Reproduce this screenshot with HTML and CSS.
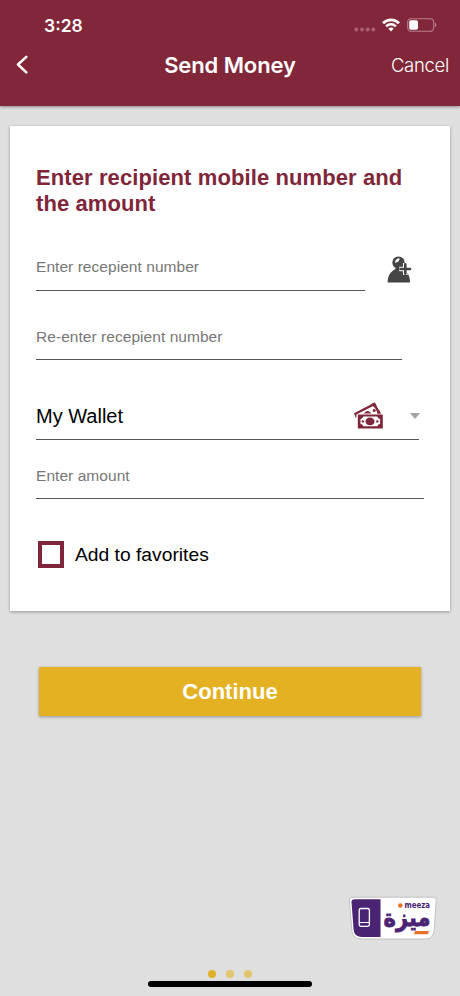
FILE: index.html
```html
<!DOCTYPE html>
<html lang="en">
  <head>
    <meta charset="UTF-8" />
    <meta name="viewport" content="width=device-width, initial-scale=1.0" />
    <title>Send Money</title>
    <link rel="stylesheet" href="styles.css">
  </head>
  <body>
    <header>
      <div class="status-bar">
        <span class="time">3:28</span>
        <div class="status-icons">
          <svg width="22" height="5" viewBox="0 0 22 5" fill="#a9606e">
            <circle cx="2.3" cy="2.5" r="2" />
            <circle cx="8" cy="2.5" r="2" />
            <circle cx="13.6" cy="2.5" r="2" />
            <circle cx="19.3" cy="2.5" r="2" />
          </svg>
          <svg class="wifi" width="18" height="14" viewBox="0 0 18 14" fill="none" stroke="#fff">
            <path d="M1 5.2C5.4.7 12.6.7 17 5.2" stroke-width="2.7" />
            <path d="M4.1 8.3c2.7-2.7 7.1-2.7 9.8 0" stroke-width="2.4" />
            <path d="M6.2 10.6c1.6-1.5 4-1.5 5.6 0L9 13.5z" fill="#fff" stroke="none" />
          </svg>
          <svg width="30" height="14" viewBox="0 0 30 14">
            <rect x="0.7" y="0.7" width="26" height="12.6" rx="3.6" fill="none" stroke="#b8808c" stroke-width="1.1" />
            <rect x="2.2" y="2.3" width="8.8" height="9.4" rx="1.8" fill="#fff" />
            <path d="M28 4.8c1.7.5 1.7 3.9 0 4.4z" fill="#b8808c" />
          </svg>
        </div>
      </div>
      <nav>
        <a href="#" class="back" aria-label="Back">
          <svg width="12" height="20" viewBox="0 0 12 20" fill="none" stroke="#fff" stroke-width="2.5">
            <path d="M10.3 1.8 2 9.5l8.3 7.9" stroke-linecap="round" stroke-linejoin="round" />
          </svg>
        </a>
        <h1>Send Money</h1>
        <a href="#" class="cancel">Cancel</a>
      </nav>
    </header>

    <main>
      <form action="">
        <h2>Enter recipient mobile number and the amount</h2>
        <div class="row">
          <input type="text" class="field recipient" placeholder="Enter recepient number" />
          <svg class="contact" width="26" height="28" viewBox="0 0 26 28">
            <circle cx="11.5" cy="6.7" r="6.2" fill="#454545" />
            <path d="M8.8 10h5.8l.5 3.3c4.8 1.3 8 6.5 8 13.2H.6c0-6.7 3.2-11.4 7.7-13.2z" fill="#454545" />
            <path d="M8 6.8C8 3.8 10 2.3 12.6 2.3c.2 2.3-1.6 4.1-4.6 4.5z" fill="#fff" />
            <path d="M18.3 7v12M12.3 13h12" stroke="#fff" stroke-width="4.6" />
            <path d="M18.3 8.3v9.4M13.6 13H23" stroke="#454545" stroke-width="2.6" stroke-linecap="round" />
          </svg>
        </div>
        <input type="text" class="field confirm" placeholder="Re-enter recepient number" />
        <div class="wallet">
          <span>My Wallet</span>
          <svg class="cash" width="30" height="28" viewBox="0 0 30 28">
            <path d="M0 11.2 20.7.4l6 11H24l-4.3-7.7L2.4 12.5v3H1.6z" fill="#80263a" />
            <path d="m17.5 1.7 3.2-1.3 2 3.6-2.5 1.4zM23.3 9.2l2.2-.7 1.4 3.1h-4z" fill="#80263a" />
            <path d="M10 11.5c1.8-3.1 5-3.4 7.1 0z" fill="#80263a" />
            <circle cx="20.2" cy="8.5" r="1.5" fill="#80263a" />
            <path d="M3.8 12.5h25v14h-25z" fill="#80263a" />
            <path d="M9.2 14.6h14.2c.2 1.3 1 2 2.7 2.3v5c-1.7.3-2.5 1-2.7 2.3H9.2c-.2-1.3-1-2-2.7-2.3v-5c1.7-.3 2.5-1 2.7-2.3z" fill="#fff" />
            <ellipse cx="16" cy="19.4" rx="4.5" ry="3.9" fill="#80263a" />
            <circle cx="8.9" cy="19.4" r="1.2" fill="#80263a" />
            <circle cx="23.3" cy="19.4" r="1.2" fill="#80263a" />
          </svg>
          <svg class="arrow" width="10" height="6" viewBox="0 0 10 6">
            <path d="M0 0h10L5 6z" fill="#a3a3a3" />
          </svg>
        </div>
        <input type="text" class="field amount" placeholder="Enter amount" />
        <label class="favorite">
          <input type="checkbox" />
          <span>Add to favorites</span>
        </label>
      </form>
      <button type="submit">Continue</button>
    </main>

    <footer>
      <svg class="logo" width="90" height="46" viewBox="0 0 90 46">
        <path d="M6 2.2h79.3q3.2 0 2.9 3.2l-2 29.8q-.7 8.8-8.8 8.8H13.5q-8.8 0-9.6-8.5L1.4 5.8Q1.2 2.2 6 2.2z" fill="#fff" stroke="#bcbcbc" stroke-width=".9" />
        <path d="M7 4.2h25.5v37.9H14q-7.8 0-8.4-7.3L3.5 7q-.2-2.8 3.5-2.8z" fill="#4b2373" />
        <rect x="11.2" y="13.5" width="10.2" height="17.8" rx="1.8" fill="none" stroke="#fff" stroke-width="1.3" />
        <path d="M11.5 27.5h9.8" stroke="#fff" />
        <text class="logo-arabic" x="35.5" y="30.5" textLength="47" lengthAdjust="spacingAndGlyphs">ميزة</text>
        <path d="M67 36h14l-1.2 3.2H66z" fill="#e8702a" />
        <circle cx="52.3" cy="10.5" r="2.3" fill="#e8702a" />
        <text class="logo-latin" x="56.5" y="12.5" textLength="25.5" lengthAdjust="spacingAndGlyphs">meeza</text>
      </svg>
      <div class="dots">
        <span class="active"></span>
        <span></span>
        <span></span>
      </div>
      <div class="home-indicator"></div>
    </footer>
  </body>
</html>
```
FILE: styles.css
```css
*,
*::before,
*::after {
  box-sizing: border-box;
  margin: 0;
  padding: 0;
  font-family: "Liberation Sans", Arial, sans-serif;
}
body {
  display: flex;
  flex-direction: column;
  height: 996px;
  background: #dfdfdf;
  overflow: hidden;
}
svg {
  display: block;
  flex-shrink: 0;
}
header {
  height: 106px;
  background: #822739;
  color: #fff;
  box-shadow: 0 1px 3px #00000066;
}
.status-bar {
  display: flex;
  justify-content: space-between;
  height: 45px;
  padding: 15px 23px 0 44px;
}
.time {
  font-family: Inter, sans-serif;
  font-size: 17.5px;
  font-weight: 600;
  line-height: 22px;
}
.status-icons {
  display: flex;
  align-items: center;
  height: 20px;
}
.status-icons svg:first-child {
  margin: 9px 6px 0 0;
}
.wifi {
  margin-right: 7px;
}
nav {
  display: grid;
  grid-template-columns: 95px 1fr 100px;
  align-items: center;
  height: 40px;
  padding: 0 11px 0 16px;
}
h1 {
  font-family: Inter, sans-serif;
  font-size: 22px;
  font-weight: 600;
  letter-spacing: -0.1px;
  text-align: center;
}
.cancel {
  color: #fff;
  font-family: Inter, sans-serif;
  font-size: 18.5px;
  font-weight: 300;
  letter-spacing: -0.3px;
  text-align: right;
  text-decoration: none;
}
main {
  flex: 1;
  padding-top: 20px;
}
form {
  height: 485px;
  margin: 0 10px;
  padding: 39px 26px 0;
  background: #fff;
  box-shadow: 0 1px 3px #00000055;
}
h2 {
  color: #80263a;
  font-size: 22px;
  line-height: 26px;
  letter-spacing: 0.1px;
}
.row {
  display: flex;
  margin-top: 27px;
}
.field {
  display: block;
  height: 47px;
  border: none;
  border-bottom: 1px solid #555;
  outline: none;
  background: transparent;
  font-size: 15.5px;
  letter-spacing: 0.05px;
}
.field::placeholder {
  color: #777;
  opacity: 1;
}
.recipient {
  width: 329px;
}
.contact {
  margin: 12px 0 0 22px;
}
.confirm {
  width: 366px;
  margin-top: 22px;
  padding-top: 2px;
}
.wallet {
  display: flex;
  align-items: center;
  width: 383px;
  height: 48px;
  margin-top: 32px;
  border-bottom: 1px solid #555;
  font-size: 20px;
}
.wallet span {
  padding-top: 1px;
}
.cash {
  margin: 1px 0 0 auto;
}
.arrow {
  margin: 1px -1px 0 26px;
}
.amount {
  width: 388px;
  margin-top: 12px;
  padding-top: 2px;
}
.favorite {
  display: flex;
  align-items: center;
  margin-top: 42px;
  padding-left: 2px;
  font-size: 19.25px;
}
.favorite input {
  appearance: none;
  width: 26px;
  height: 27px;
  margin-right: 11px;
  border: 4px solid #80263a;
}
.favorite span {
  padding-top: 1px;
}
button[type="submit"] {
  display: block;
  width: 382px;
  height: 49px;
  margin: 56px 0 0 39px;
  border: none;
  border-radius: 0;
  background: #e4b122;
  box-shadow: 0 1px 3px #00000055;
  color: #fff;
  font-size: 22px;
  font-weight: bold;
}
footer {
  display: flex;
  flex-direction: column;
  align-items: center;
}
.logo {
  align-self: flex-end;
  margin-right: 22px;
  overflow: visible;
}
.logo-arabic {
  fill: #4b2373;
  stroke: #4b2373;
  stroke-width: 0.8px;
  font: bold 24px "DejaVu Sans", sans-serif;
}
.logo-latin {
  fill: #4b2373;
  font: bold 8.5px "DejaVu Sans", sans-serif;
}
.dots {
  display: flex;
  gap: 10px;
  margin-top: 29px;
}
.dots span {
  width: 8px;
  height: 8px;
  border-radius: 50%;
  background: #e1c66d;
}
.dots .active {
  background: #dfb02c;
}
.home-indicator {
  width: 164px;
  height: 6px;
  margin: 3px 0 9px;
  border-radius: 3px;
  background: #000;
}
```
